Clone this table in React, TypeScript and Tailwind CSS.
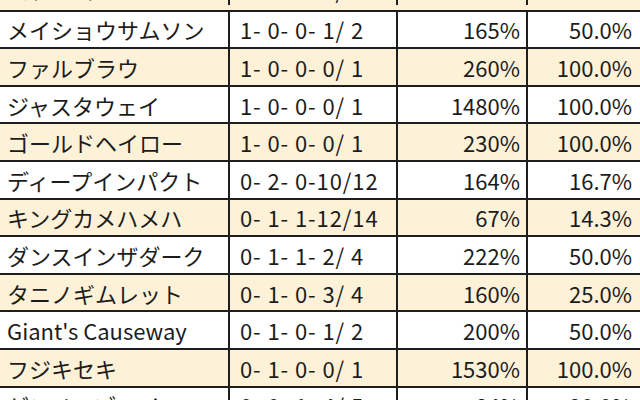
const rows = [
  { name: "ステイゴールド", rec: "0- 0- 0- 1/ 1", roi: "120%", rate: "100.0%" },
  { name: "メイショウサムソン", rec: "1- 0- 0- 1/ 2", roi: "165%", rate: "50.0%" },
  { name: "ファルブラウ", rec: "1- 0- 0- 0/ 1", roi: "260%", rate: "100.0%" },
  { name: "ジャスタウェイ", rec: "1- 0- 0- 0/ 1", roi: "1480%", rate: "100.0%" },
  { name: "ゴールドヘイロー", rec: "1- 0- 0- 0/ 1", roi: "230%", rate: "100.0%" },
  { name: "ディープインパクト", rec: "0- 2- 0-10/12", roi: "164%", rate: "16.7%" },
  { name: "キングカメハメハ", rec: "0- 1- 1-12/14", roi: "67%", rate: "14.3%" },
  { name: "ダンスインザダーク", rec: "0- 1- 1- 2/ 4", roi: "222%", rate: "50.0%" },
  { name: "タニノギムレット", rec: "0- 1- 0- 3/ 4", roi: "160%", rate: "25.0%" },
  { name: "Giant's Causeway", rec: "0- 1- 0- 1/ 2", roi: "200%", rate: "50.0%" },
  { name: "フジキセキ", rec: "0- 1- 0- 0/ 1", roi: "1530%", rate: "100.0%" },
  { name: "ゼンノロブロイ", rec: "0- 0- 1- 4/ 5", roi: "84%", rate: "20.0%" },
];

export default function App() {
  return (
    <div
      className="w-[640px] h-[400px] overflow-hidden bg-white text-[#1c1c1c] text-[22px] leading-none"
      style={{ fontFamily: '"Noto Sans CJK JP", "Noto Sans", sans-serif' }}
    >
      <div className="-mt-[26px] flex flex-col">
        {rows.map((r, i) => (
          <div
            key={i}
            className={`flex h-[37.6px] shrink-0 border-b-2 border-[#1e1e1e] ${
              i % 2 === 0 ? "bg-[#fdf1d8]" : "bg-white"
            } ${i === 0 ? "pb-[5px]" : ""}`}
          >
            <div className="w-[230px] shrink-0 border-r-2 border-[#1e1e1e] pl-[7px] flex items-center whitespace-nowrap">
              {r.name}
            </div>
            <div className="w-[168px] shrink-0 border-r-2 border-[#1e1e1e] pl-[10px] flex items-center whitespace-pre tracking-[0.9px]">
              {r.rec}
            </div>
            <div className="w-[130px] shrink-0 border-r-2 border-[#1e1e1e] pr-[6px] flex items-center justify-end">
              {r.roi}
            </div>
            <div className="flex-1 pr-[8px] flex items-center justify-end">
              {r.rate}
            </div>
          </div>
        ))}
      </div>
    </div>
  );
}
